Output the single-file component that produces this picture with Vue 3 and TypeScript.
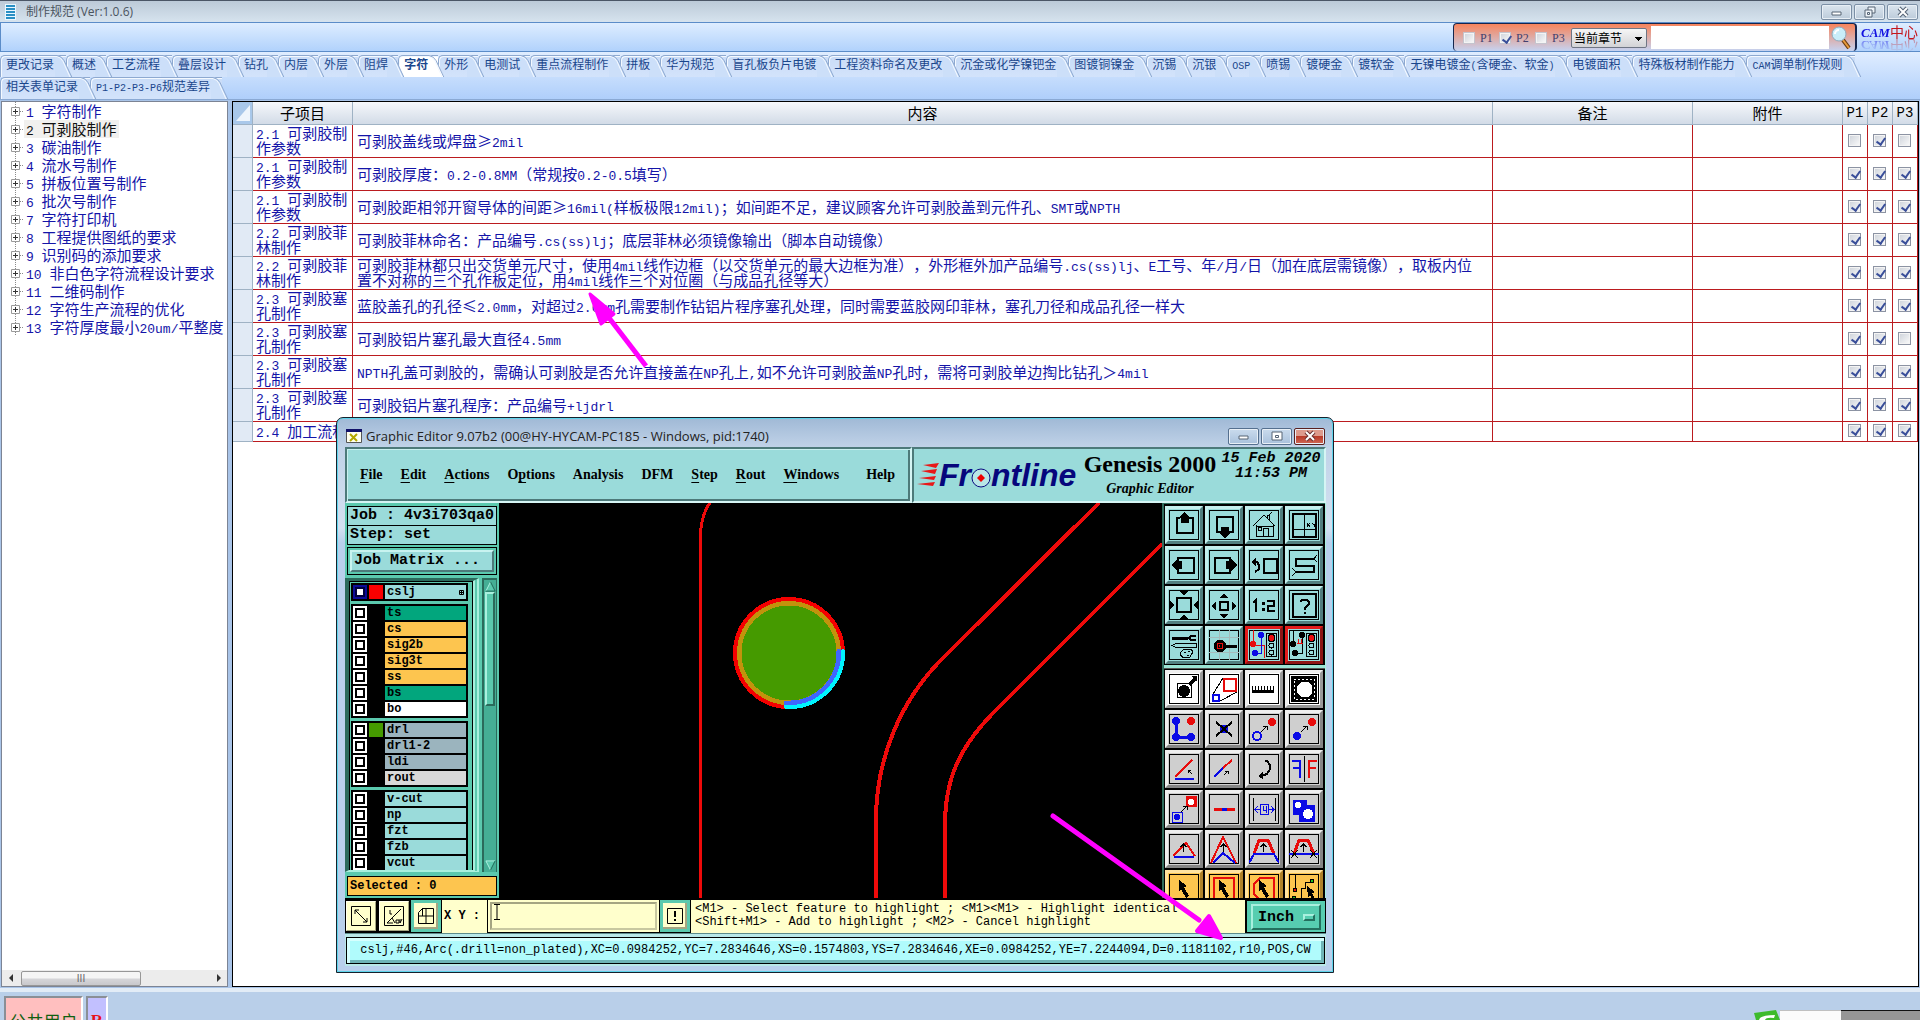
<script setup lang="ts">
import { reactive, ref } from 'vue'

interface Run { text: string; latin: boolean }
interface SpecRow { item: string; body: string; flags: boolean[] }
interface Layer { name: string; tone: string; swatch?: string }
interface Tool { label: string; art: string; tone: string }

/* Splits mixed text so that half-width characters get the monospace face. */
function runs(text: string): Run[] {
  return (text.match(/[\x20-\x7e]+|[^\x20-\x7e]+/g) ?? []).map((part) => ({
    text: part,
    latin: /^[\x20-\x7e]/.test(part),
  }))
}

const tabRows: string[][] = [
  ['更改记录', '概述', '工艺流程', '叠层设计', '钻孔', '内层', '外层', '阻焊', '字符', '外形', '电测试', '重点流程制作', '拼板', '华为规范', '盲孔板负片电镀', '工程资料命名及更改', '沉金或化学镍钯金', '图镀铜镍金', '沉锡', '沉银', 'OSP', '喷锡', '镀硬金', '镀软金', '无镍电镀金(含硬金、软金)', '电镀面积', '特殊板材制作能力', 'CAM调单制作规则'],
  ['相关表单记录', 'P1-P2-P3-P6规范差异'],
]
const activeTab = ref('字符')

const chapters: string[] = [
  '1 字符制作', '2 可剥胶制作', '3 碳油制作', '4 流水号制作', '5 拼板位置号制作', '6 批次号制作', '7 字符打印机',
  '8 工程提供图纸的要求', '9 识别码的添加要求', '10 非白色字符流程设计要求', '11 二维码制作', '12 字符生产流程的优化', '13 字符厚度最小20um/平整度',
]
const activeChapter = ref(1)

const specs = reactive<SpecRow[]>([
  { item: '2.1 可剥胶制作参数', body: '可剥胶盖线或焊盘≥2mil', flags: [false, true, false] },
  { item: '2.1 可剥胶制作参数', body: '可剥胶厚度：0.2-0.8MM（常规按0.2-0.5填写）', flags: [true, true, true] },
  { item: '2.1 可剥胶制作参数', body: '可剥胶距相邻开窗导体的间距≥16mil(样板极限12mil)；如间距不足，建议顾客允许可剥胶盖到元件孔、SMT或NPTH', flags: [true, true, true] },
  { item: '2.2 可剥胶菲林制作', body: '可剥胶菲林命名：产品编号.cs(ss)lj；底层菲林必须镜像输出（脚本自动镜像）', flags: [true, true, true] },
  { item: '2.2 可剥胶菲林制作', body: '可剥胶菲林都只出交货单元尺寸，使用4mil线作边框（以交货单元的最大边框为准），外形框外加产品编号.cs(ss)lj、E工号、年/月/日（加在底层需镜像），取板内位置不对称的三个孔作板定位，用4mil线作三个对位圈（与成品孔径等大）', flags: [true, true, true] },
  { item: '2.3 可剥胶塞孔制作', body: '蓝胶盖孔的孔径≤2.0mm，对超过2.0mm孔需要制作钻铝片程序塞孔处理，同时需要蓝胶网印菲林，塞孔刀径和成品孔径一样大', flags: [true, true, true] },
  { item: '2.3 可剥胶塞孔制作', body: '可剥胶铝片塞孔最大直径4.5mm', flags: [true, true, false] },
  { item: '2.3 可剥胶塞孔制作', body: 'NPTH孔盖可剥胶的，需确认可剥胶是否允许直接盖在NP孔上,如不允许可剥胶盖NP孔时，需将可剥胶单边掏比钻孔＞4mil', flags: [true, true, true] },
  { item: '2.3 可剥胶塞孔制作', body: '可剥胶铝片塞孔程序：产品编号+ljdrl', flags: [true, true, true] },
  { item: '2.4 加工流程', body: '', flags: [true, true, true] },
])

const filters = reactive([
  { name: 'P1', on: false },
  { name: 'P2', on: true },
  { name: 'P3', on: false },
])

/* Menu captions, split round the underlined mnemonic. */
const menus: string[][] = [
  ['', 'F', 'ile'], ['', 'E', 'dit'], ['', 'A', 'ctions'], ['O', 'p', 'tions'], ['Analysis', '', ''],
  ['DFM', '', ''], ['', 'S', 'tep'], ['', 'R', 'out'], ['', 'W', 'indows'], ['Help', '', ''],
]

const layerGroups: Layer[][] = [
  [{ name: 'cslj', tone: 'aqua', swatch: 'red' }],
  [
    { name: 'ts', tone: 'green' }, { name: 'cs', tone: 'amber' }, { name: 'sig2b', tone: 'amber' }, { name: 'sig3t', tone: 'amber' },
    { name: 'ss', tone: 'amber' }, { name: 'bs', tone: 'green' }, { name: 'bo', tone: 'white' },
  ],
  [{ name: 'drl', tone: 'slate', swatch: 'leaf' }, { name: 'drl1-2', tone: 'slate' }, { name: 'ldi', tone: 'slate' }, { name: 'rout', tone: 'silver' }],
  [{ name: 'v-cut', tone: 'aqua' }, { name: 'np', tone: 'aqua' }, { name: 'fzt', tone: 'aqua' }, { name: 'fzb', tone: 'aqua' }, { name: 'vcut', tone: 'aqua' }],
]

const K = '#000000'
const R = '#e80c0c'
const B = '#0a0ae6'
const line = (d: string, c = K, w = 1) => `<path d="${d}" fill="none" stroke="${c}" stroke-width="${w}"/>`
const fill = (d: string, c = K) => `<path d="${d}" fill="${c}"/>`
const dot = (x: number, y: number, r: number, c = K) => `<circle cx="${x}" cy="${y}" r="${r}" fill="${c}"/>`
const ring = (x: number, y: number, r: number, c = K, w = 1, f = 'none') => `<circle cx="${x}" cy="${y}" r="${r}" fill="${f}" stroke="${c}" stroke-width="${w}"/>`
const pointer = fill('M10 6l8 6-3 1 5 9-3 2-5-9-2 3z')
const smallArrow = line('M12 18l6-6M14 12h4v4')
const upArrow = line('M14.5 18v-8M11.5 13l3-3 3 3')
const lights = line('M17.5 3.5h10v23h-10z') + ring(22.5, 8, 3.5, K, 1, R) + ring(22.5, 15.5, 2.5) + ring(22.5, 22.5, 2.5)

const art: [string, string][] = [
  ['Pan up', line('M11 8H8v15h16V8h-4', K, 2) + fill('M15.5 2l6 6h-2v5h-8V8h-2z')],
  ['Pan down', line('M12 22H8V7h16v15h-4', K, 2) + fill('M12 17h8v6h2l-6 5-6-5h2z')],
  ['Home', line('M4 16L15 5l11 11M7 15v11h17V15M14.5 26v-8h5v8M20 10V5l3-3M18 8V5h3M7 16h17') + line('M9.5 17.5h3v3h-3z')],
  ['Coordinates', line('M4 4h23v23H4z', K, 2) + line('M15.5 4v23M4 19.5h23') + line('M18 13l3 4M21 13l-3 4M23 13l2 2 2-2M25 15v2')],
  ['Pan left', line('M9 12V8h16v15H9v-4', K, 2) + fill('M2 15l6-6v2h5v8H8v2z')],
  ['Pan right', line('M21 12V8H6v15h15v-4', K, 2) + fill('M28 15l-6-6v2h-5v8h5v2z')],
  ['Previous view', line('M15 9h13v14H15z', K, 2) + line('M5 12h3l2 3v4l-4 3', K, 2) + fill('M2 12l5-5v9z')],
  ['Snake', line('M25 9H7v6.5h18V22H7', K, 2) + line('M25 9l3-4M25 9l3 3M7 22l-4-4M7 22l-4 4')],
  ['Zoom in', line('M8 8h14v14H8z', K, 2) + fill('M10 1h10l-5 4zM10 29h10l-5-4zM1 10v10l4-5zM29 10v10l-4-5z')],
  ['Zoom out', line('M11 12h8v8h-8z', K, 2) + fill('M10 8h10l-5-4zM10 24h10l-5 4zM7 11v10l-4-5zM23 11v10l4-5z')],
  ['Zoom ratio', line('M4 13l3-3v12', K, 2) + fill('M13 12h3v3h-3zM13 18h3v3h-3z') + line('M18 11h7v5h-6v5h7', K, 2)],
  ['Help', line('M4 4h23v23H4z', K, 2) + line('M11 12l2-2h5l2 2v2l-4 4v2M16 22v2', K, 2)],
  ['Utilities', line('M3 8h16', K, 3) + line('M27 6h-5l-2 2 2 2h5', K, 2) + line('M3 15.5l4-2h20v4H7z') + line('M11 23l4-4h7l2 3-3 5-6 1-4-3zM15 22h2M19 21h2M18 25h2')],
  ['Snap', line('M10 0v30M20 0v30M0 7h30M0 22h30', '#a5bcbc') + fill('M8 10h5l4 4v4l-4 4H8l-3-4v-4z') + fill('M16 15h12v3H16z') + line('M8 13h5v5H8z', R) + line('M10 15.5h1', R, 2)],
  ['Net compare', line('M4 0v15M4 15h11v13', R, 1) + line('M12 5v18H6', B, 1) + dot(4, 14, 3, R) + dot(12, 5, 3, B) + dot(6, 23, 3, B) + lights],
  ['Net report', line('M4 0v15M13 5v18H7') + dot(4, 14, 3) + dot(13, 5, 3) + dot(6, 23, 3) + line('M8 13h6M9 9v4M12 9v4', R) + lights],
  ['Select feature', line('M8.5 9.5h14v14h-14z') + dot(15, 17, 6) + line('M20 11l6-6', K, 3) + fill('M22 2h6v6z')],
  ['Transform', line('M15 5h12v12H15z', R, 2) + line('M4 21h6v6H4z', B, 2) + line('M4 20L14 4M11 27l17-9')],
  ['Measure', fill('M3 12h1v4h2v-4h1v4h2v-4h1v4h2v-4h1v4h2v-4h1v4h2v-4h1v4h2v-4h1v4h2v-4h1v7H3z')],
  ['Surface', fill('M2 2h26v26H2z') + '<path d="M5 5h20v20H5z" fill="none" stroke="#fff" stroke-dasharray="2 2"/>' + fill('M12 8h7l4 4v7l-4 4h-7l-4-4v-7z', '#fff')],
  ['Move points', line('M7 7v16h16', B, 3) + dot(7, 7, 4, B) + dot(7, 23, 4, B) + dot(22, 23, 4, B) + dot(22, 7, 4, R)],
  ['Delete', dot(15, 15, 4, B) + line('M7 8l16 14M23 8L7 22', K, 2)],
  ['Copy', ring(8, 22, 4, B, 2) + dot(23, 8, 4, R) + smallArrow],
  ['Move', dot(8, 22, 4, B) + dot(23, 8, 4, R) + smallArrow],
  ['Rotate', line('M6 23L23 6', R, 2) + line('M6 25h19', B, 2) + line('M23 20l-4-4M19 19v-3h3')],
  ['Stretch', line('M5 23l9-9', B, 2) + line('M14 14l9-8', R, 2) + line('M15 21l4-4M16 17h3v3')],
  ['Undo', line('M16 7h2l3 4v4l-3 5-6 2', K, 2) + fill('M9 22l5-4v7z')],
  ['Mirror', line('M15.5 2v26') + line('M3 7h8v17M11 14H4', B, 2) + line('M28 7h-8v17M20 14h7', R, 2)],
  ['Swap symbol', line('M3 18h10v10H3z', B) + dot(8, 23, 3, B) + fill('M17 2h11v11H17z', R) + dot(22, 8, 3, '#fff') + smallArrow],
  ['Break', line('M5 15h21', R, 3) + line('M13 15h5', B, 3)],
  ['Resize', line('M4.5 4v23M26.5 4v23') + line('M6 15.5h6M19 15.5h6M9 12l-3 3.5 3 3.5M22 12l3 3.5-3 3.5M11.5 10.5h8v10h-8zM14.5 12v4h3M17.5 12v7', B)],
  ['Merge', fill('M4 6h14v5h8v17H10v-7H4z', B) + dot(9, 11, 3, '#fff') + dot(19, 20, 5, '#fff')],
  ['Corner', line('M4 22L17 9l9 13', R, 2) + line('M5 23h20', B, 2) + upArrow],
  ['Peak', line('M2 29L14 3l13 26', R, 2) + line('M4 29l10-10 12 10', B, 2) + upArrow],
  ['Trapezoid', line('M5 20L10 6h9l6 14', R, 3) + line('M0 29l5-9h20l5 9', B, 2) + upArrow],
  ['Trapezoid cut', line('M5 20L10 6h9l6 14', R, 3) + line('M0 20h30', B, 2) + line('M2 16l7 8M9 16l-7 8M21 16l7 8M28 16l-7 8') + upArrow],
  ['Pick', pointer],
  ['Pick in frame', line('M5 4h20v22H5z', R, 2) + pointer],
  ['Pick in polygon', line('M11 4h14v22H11l-6-6V10z', R, 2) + pointer],
  ['Pick net', line('M6 0v16M23 8h-7v6h-4v10H6') + ring(6, 16, 2, K, 1, R) + ring(23, 7, 2, K, 1, '#1fc01f') + ring(5, 24, 2, K, 1, '#1fc01f') + fill('M18 12l8 6-3 1 4 9h-3l-3-7-2 2z')],
]
const tools: Tool[] = art.map(([label, picture], i) => ({
  label,
  art: picture,
  tone: i < 14 ? 'aqua' : i < 16 ? 'alert' : i < 20 ? 'white' : i < 36 ? 'grey' : 'amber',
}))
const toolGroups: Tool[][] = [tools.slice(0, 16), tools.slice(16)]

const search = ref('')
const coords = ref('')
</script>

<template>
  <div class="app">
    <header class="titlebar">
      <svg class="doc-icon" viewBox="0 0 14 16" aria-hidden="true">
        <path d="M1 0h11v16H1z" fill="#e9f7ff" />
        <path d="M2 2h9M2 5h9M2 8h9M2 11h9M2 14h9" stroke="#2a8fc4" stroke-width="2" />
      </svg>
      <h1>制作规范 (Ver:1.0.6)</h1>
      <div class="controls">
        <button type="button" aria-label="最小化"><svg viewBox="0 0 14 12"><path d="M2 6h9v3H2z" fill="#fff" stroke="#566475" /></svg></button>
        <button type="button" aria-label="还原"><svg viewBox="0 0 14 12"><path d="M5 1h7v6H5z" fill="#eef3f8" stroke="#566475" /><path d="M2 4h7v7H2zM4.5 6.5h2v2h-2z" fill="#eef3f8" stroke="#566475" /></svg></button>
        <button type="button" aria-label="关闭"><svg viewBox="0 0 14 12"><path d="M3 2l8 8M11 2l-8 8" stroke="#566475" stroke-width="4" /><path d="M3 2l8 8M11 2l-8 8" stroke="#fff" stroke-width="2" /></svg></button>
      </div>
    </header>

    <div class="toolbar">
      <div class="searchbox">
        <label v-for="f in filters" :key="f.name" class="filter"><input v-model="f.on" type="checkbox" class="tick" />{{ f.name }}</label>
        <select aria-label="范围"><option>当前章节</option></select>
        <input v-model="search" type="text" class="query" aria-label="搜索" />
        <button type="button" class="go" aria-label="查找">
          <svg viewBox="0 0 20 24"><path d="M12 14l6 8" stroke="#6b3c12" stroke-width="4" /><path d="M12 14l6 8" stroke="#e89a3c" stroke-width="2" /><circle cx="8" cy="8" r="7" fill="#c9eef9" stroke="#8fa9bc" stroke-width="1" /><path d="M4 8a4 4 0 0 1 4-4" fill="none" stroke="#fff" stroke-width="2" /></svg>
        </button>
      </div>
      <div class="brand"><i>CAM</i><span>中心</span></div>
    </div>

    <nav class="tabs">
      <div v-for="(row, r) in tabRows" :key="r" class="tab-row">
        <button v-for="t in row" :key="t" type="button" class="tab" :class="{ active: t === activeTab, long: t.length > 3 }" @click="activeTab = t">
          <span v-for="(s, i) in runs(t)" :key="i" class="caption" :class="{ latin: s.latin }">{{ s.text }}</span>
          <svg class="slant" viewBox="0 0 18 22" aria-hidden="true">
            <path class="face" d="M0 0h2q5 1 7 5l8 17H0z" />
            <path d="M0 1.5h2q4 1 6 5l7 15.5" fill="none" stroke="#f4f9ff" />
            <path d="M0 .5h2q5 1 7 5l8 17" fill="none" stroke="#8ea9d0" />
          </svg>
        </button>
      </div>
    </nav>

    <main class="work">
      <aside class="tree">
        <ul>
          <li v-for="(c, i) in chapters" :key="c">
            <svg class="expander" viewBox="0 0 16 18" aria-hidden="true">
              <path d="M7.5 0v18M8 9.5h8" stroke="#8a8a8a" stroke-dasharray="1 1" />
              <path d="M3.5 5.5h8v8h-8z" fill="#fff" stroke="#9a9a9a" />
              <path d="M5 9.5h5M7.5 7v5" stroke="#333" />
            </svg>
            <button type="button" :class="{ current: i === activeChapter }" @click="activeChapter = i">
              <span v-for="(s, k) in runs(c)" :key="k" :class="{ latin: s.latin }">{{ s.text }}</span>
            </button>
          </li>
        </ul>
        <div class="hscroll">
          <svg viewBox="0 0 6 10"><path d="M5 1v8L1 5z" fill="#333" /></svg>
          <div class="track"><div class="thumb">III</div></div>
          <svg viewBox="0 0 6 10"><path d="M1 1v8l4-4z" fill="#333" /></svg>
        </div>
      </aside>

      <section class="sheet">
        <table>
          <colgroup><col class="c-mark" /><col class="c-item" /><col /><col class="c-note" /><col class="c-file" /><col class="c-flag" /><col class="c-flag" /><col class="c-flag" /></colgroup>
          <thead>
            <tr>
              <th class="corner"><svg viewBox="0 0 14 16" aria-hidden="true"><path d="M14 0v16H0z" fill="#eef5fc" /></svg></th>
              <th>子项目</th><th>内容</th><th>备注</th><th>附件</th>
              <th class="flag">P1</th><th class="flag">P2</th><th class="flag">P3</th>
            </tr>
          </thead>
          <tbody>
            <tr v-for="(row, i) in specs" :key="i">
              <th class="mark"></th>
              <td class="item"><span v-for="(s, k) in runs(row.item)" :key="k" :class="{ latin: s.latin }">{{ s.text }}</span></td>
              <td class="content"><span v-for="(s, k) in runs(row.body)" :key="k" :class="{ latin: s.latin }">{{ s.text }}</span></td>
              <td></td>
              <td></td>
              <td v-for="(_, k) in row.flags" :key="k" class="flag"><input v-model="row.flags[k]" type="checkbox" class="tick" :aria-label="'P' + (k + 1)" /></td>
            </tr>
          </tbody>
        </table>
      </section>
    </main>

    <footer class="status">
      <div class="user">公共用户</div>
      <div class="role">R</div>
      <div class="tray">
        <svg class="ime" viewBox="0 0 26 10" aria-hidden="true"><path d="M0 3L22 0l4 10H2z" fill="#3dbb2c" /><path d="M5 10q1-5 16-5l-1 3q-8-1-9 2z" fill="#fff" /></svg>
        <div class="ime-bar"></div>
        <div class="ime-end"></div>
      </div>
    </footer>

    <section class="editor" aria-label="Graphic Editor">
      <header class="ed-title">
        <svg viewBox="0 0 16 14" class="x-icon" aria-hidden="true"><path d="M.5.5h15v13H.5z" fill="#fffff0" stroke="#555" /><path d="M0 0h16v3H0z" fill="#12126a" /><path d="M4 5l7 7M11 5l-7 7" stroke="#b5a800" stroke-width="2" /></svg>
        <h2>Graphic Editor 9.07b2 (00@HY-HYCAM-PC185 - Windows, pid:1740)</h2>
        <div class="controls">
          <button type="button" aria-label="Minimize"><svg viewBox="0 0 14 12"><path d="M2 6h9v3H2z" fill="#fff" stroke="#566475" /></svg></button>
          <button type="button" aria-label="Maximize"><svg viewBox="0 0 14 12"><path d="M2 2h10v8H2zM5.5 5.5h3v2h-3z" fill="#fff" stroke="#566475" /></svg></button>
          <button type="button" class="close" aria-label="Close"><svg viewBox="0 0 14 12"><path d="M3 2l8 8M11 2l-8 8" stroke="#6a3030" stroke-width="4" /><path d="M3 2l8 8M11 2l-8 8" stroke="#fff" stroke-width="2" /></svg></button>
        </div>
      </header>

      <div class="ed-body">
        <div class="ed-top">
          <nav class="menu">
            <button v-for="m in menus" :key="m.join('')" type="button">{{ m[0] }}<u>{{ m[1] }}</u>{{ m[2] }}</button>
          </nav>
          <div class="banner">
            <div class="logo">
              <svg class="streaks" viewBox="0 0 22 26" aria-hidden="true"><path d="M6 3l16-2-3 5zM4 9l16-2-2 5zM2 16l17-2-2 4zM0 22l18-2-2 4z" fill="#e81818" /></svg>
              <span>Fr</span>
              <svg class="target" viewBox="0 0 20 20" aria-hidden="true"><circle cx="10" cy="10" r="9" fill="#b8e6e6" stroke="#0a0a80" stroke-width="1" /><path d="M10 6l4 4-4 4-4-4z" fill="#e00" /></svg>
              <span>ntline</span>
            </div>
            <div class="product"><strong>Genesis 2000</strong><em>Graphic Editor</em></div>
            <div class="clock">15 Feb 2020<br />11:53 PM</div>
          </div>
        </div>

        <div class="ed-mid">
          <aside class="layers">
            <div class="box">Job : 4v3i703qa0</div>
            <div class="box step">Step: set</div>
            <div class="box matrix"><button type="button">Job Matrix ...</button></div>
            <div class="list-area">
              <div class="list">
                <div v-for="(g, gi) in layerGroups" :key="gi" class="group">
                  <div v-for="l in g" :key="l.name" class="layer">
                    <input type="checkbox" class="display" :class="{ work: l.name === 'cslj' }" :aria-label="'Display ' + l.name" />
                    <i class="swatch" :class="l.swatch"></i>
                    <span class="name" :class="l.tone">{{ l.name }}<svg v-if="gi === 0" class="affected" viewBox="0 0 5 5" aria-hidden="true"><path d="M.5.5h4v4h-4zM2.5 0v5M0 2.5h5" fill="none" stroke="#000" /></svg></span>
                  </div>
                </div>
              </div>
              <div class="vscroll">
                <svg viewBox="0 0 12 12"><path d="M6 1L1 11h10z" fill="#5bc9ae" /><path d="M6 1L1 11" stroke="#b5f5e5" /><path d="M6 1l5 10H1" fill="none" stroke="#1c6453" /></svg>
                <div class="grip"></div>
                <svg viewBox="0 0 12 12"><path d="M1 1h10L6 11z" fill="#5bc9ae" /><path d="M6 11L1 1h10" fill="none" stroke="#b5f5e5" /><path d="M6 11l5-10" stroke="#1c6453" /></svg>
              </div>
            </div>
            <div class="box selected">Selected : 0</div>
          </aside>

          <div class="canvas">
            <svg viewBox="0 0 663 395" preserveAspectRatio="xMinYMin slice" shape-rendering="crispEdges" role="img" aria-label="Layer cslj">
              <path d="M201.5 395V30Q203 10 211 0" fill="none" stroke="#ee0a0a" stroke-width="3" />
              <g fill="none" stroke="#ee0a0a" stroke-width="4">
                <path d="M600 0L447 152C400 197 377 258 377 317V395" />
                <path d="M663 41L501 203C463 240 446 272 446 322V395" />
              </g>
              <circle cx="290" cy="150" r="49" fill="#459a00" />
              <circle cx="290" cy="150" r="50" fill="none" stroke="#c2930c" stroke-width="5" />
              <circle cx="290" cy="150" r="54" fill="none" stroke="#f40000" stroke-width="4" />
              <path d="M340 148A50 50 0 0 1 287 200" fill="none" stroke="#3f66ff" stroke-width="5" stroke-linecap="round" />
              <path d="M344 148A54 54 0 0 1 287 204" fill="none" stroke="#00f4ff" stroke-width="4" stroke-linecap="round" />
            </svg>
          </div>

          <div class="tools">
            <div v-for="(g, gi) in toolGroups" :key="gi" class="tool-grid" :class="{ lower: gi === 1 }">
              <button v-for="t in g" :key="t.label" type="button" class="tool" :class="t.tone" :aria-label="t.label">
                <svg viewBox="0 0 30 30" shape-rendering="crispEdges" v-html="t.art"></svg>
              </button>
            </div>
          </div>
        </div>

        <div class="ed-input">
          <button type="button" class="mode" aria-label="Window"><svg viewBox="0 0 20 20"><path d="M.5.5h19v19H.5zM4 4l12 12M4 8V4h4M12 16h4v-4" fill="none" stroke="#000" /></svg></button>
          <button type="button" class="mode" aria-label="Angle"><svg viewBox="0 0 20 20"><path d="M.5.5h19v19H.5zM3 17L17 3M3 17h6M6 4v4h2M8 12l3 5M12 14h3v3h-3zM16 13v4l2-4" fill="none" stroke="#000" /></svg></button>
          <button type="button" class="mode teal" aria-label="Grid"><svg viewBox="0 0 20 20"><path d="M2.5 6.5l4-4h11v15h-15zM10 2v16M2 10h16M6.5 2v8" fill="none" stroke="#000" /></svg></button>
          <label for="xy" class="xy">X Y :</label>
          <div class="field"><input id="xy" v-model="coords" type="text" /><svg class="caret" viewBox="0 0 6 16" aria-hidden="true"><path d="M0 .5h6M3 0v16M0 15.5h6" stroke="#000" /></svg></div>
          <button type="button" class="mode teal" aria-label="Alert"><svg viewBox="0 0 20 20"><path d="M2.5 2.5h15v15h-15z" fill="none" stroke="#000" /><path d="M10 5v6M10 13v2" stroke="#000" stroke-width="2" /></svg></button>
          <p class="hint">&lt;M1&gt; - Select feature to highlight ; &lt;M1&gt;&lt;M1&gt; - Highlight identical<br />&lt;Shift+M1&gt; - Add to highlight ; &lt;M2&gt; - Cancel highlight</p>
          <div class="unit"><button type="button">Inch<i></i></button></div>
        </div>

        <div class="ed-status"><p>cslj,#46,Arc(.drill=non_plated),XC=0.0984252,YC=7.2834646,XS=0.1574803,YS=7.2834646,XE=0.0984252,YE=7.2244094,D=0.1181102,r10,POS,CW</p></div>
      </div>
    </section>

    <svg class="arrow first" viewBox="0 0 64 80" aria-hidden="true"><path d="M60 76L17 20" stroke="#ff00ff" stroke-width="5" /><path d="M4 4l24 20-13 10z" fill="#ff00ff" stroke="#ff00ff" stroke-width="3" stroke-linejoin="round" /></svg>
    <svg class="arrow second" viewBox="0 0 178 132" aria-hidden="true"><path d="M4 5l146 104" stroke="#ff00ff" stroke-width="5" stroke-linecap="round" /><path d="M172 127l-24-7 12-15z" fill="#ff00ff" stroke="#ff00ff" stroke-width="4" stroke-linejoin="round" /></svg>
  </div>
</template>

<style>
body { margin: 0; }
</style>

<style scoped>
* { box-sizing: border-box; }
.app { position: relative; display: flex; flex-direction: column; height: 100vh; overflow: hidden; background: #b9cfe9; font-family: "Noto Sans CJK SC", sans-serif; font-size: 12px; text-spacing-trim: space-all; color: #000; }
button, input, select { font: inherit; color: inherit; margin: 0; padding: 0; border: 0; border-radius: 0; }
button { background: none; text-spacing-trim: space-all; }
svg { display: block; }
h1, h2, p, ul { margin: 0; padding: 0; font-weight: 400; }

.titlebar { display: flex; align-items: center; flex: none; height: 22px; padding: 0 2px 0 4px; border-top: 1px solid #4b5666; background: linear-gradient(#bccad8, #d6e3ee); }
.doc-icon { width: 14px; height: 16px; margin-right: 8px; }
h1 { flex: 1; font-family: "Open Sans", "Noto Sans CJK SC", sans-serif; font-size: 12px; line-height: 18px; color: #4a545e; }
.controls { display: flex; gap: 2px; }
.controls button { display: flex; align-items: center; justify-content: center; width: 31px; height: 16px; border: 1px solid #7b8fa5; border-radius: 2px; background: linear-gradient(#dbe5ee, #bccbda); box-shadow: inset 0 0 0 1px #e8eff6; }
.controls svg { width: 14px; height: 12px; }

.toolbar { display: flex; justify-content: flex-end; flex: none; height: 30px; border: 1px solid #5b8cc8; border-right: 0; background: linear-gradient(#deedff, #b1d2fc); }
.searchbox { display: flex; align-items: center; width: 404px; padding: 0 4px 0 9px; border: 1px solid #16264d; border-width: 1px 2px 0 1px; border-radius: 4px; background: linear-gradient(#f7845c, #c5d3f1); }
.filter { display: flex; align-items: center; gap: 5px; width: 36px; font-family: "Liberation Serif", serif; font-size: 12px; line-height: 14px; color: #42406e; }
.tick { appearance: none; flex: none; display: block; width: 13px; height: 13px; border: 1px solid #8c93a3; background: linear-gradient(135deg, #cdd2da, #fbfbfb); box-shadow: inset 0 0 0 1px #f4f4f4; }
.tick:checked::after { content: ""; display: block; width: 4px; height: 7px; margin: 1px 0 0 4px; border: solid #3a4f9a; border-width: 0 2px 2px 0; transform: rotate(35deg); }
.filter .tick { width: 12px; height: 12px; border-color: #c4c4ce; }
select { appearance: none; width: 76px; height: 20px; margin: 0 4px 0 0; padding: 0 2px; border: 1px solid #6f7685; border-radius: 2px; font-size: 12px; line-height: 16px; background-image: linear-gradient(-135deg, #000 50%, transparent 50%), linear-gradient(135deg, #000 50%, transparent 50%), linear-gradient(#f6f6f6, #d3d3d6); background-size: 4px 4px, 4px 4px, 100% 100%; background-position: 63px 8px, 67px 8px, 0 0; background-repeat: no-repeat; }
.query { flex: 1; min-width: 0; height: 23px; padding: 0 4px; background: #fff; }
.go { margin-left: 2px; }
.go svg { width: 20px; height: 24px; }
.brand { width: 63px; height: 16px; padding-left: 4px; font-size: 14px; line-height: 16px; white-space: nowrap; color: #c4151c; -webkit-box-reflect: below 0 linear-gradient(transparent 20%, rgba(0, 0, 0, .5)); }
.brand i { font-family: "Liberation Serif", serif; font-weight: 700; font-size: 13px; color: #1212e0; }

.tabs { flex: none; height: 48px; padding: 3px 0 0; border-bottom: 1px solid #8aa9d4; background: linear-gradient(#e0edff, #afcffb); }
.tab-row { display: flex; height: 22px; }
.tab { position: relative; flex: none; height: 22px; padding: 0 10px 5px 5px; border: 1px solid #8ea9d0; border-width: 1px 0 0 1px; border-radius: 5px 0 0 0; background: linear-gradient(#c9dcf7, #d3e3fb); box-shadow: inset 1px 1px 0 #f4f9ff; line-height: 16px; color: #1a468c; white-space: nowrap; }
.tab.long { padding-right: 12px; }
.caption { position: relative; z-index: 2; }
.tab .latin { font-family: "Liberation Mono", monospace; font-size: 10px; line-height: 1px; }
.slant { position: absolute; z-index: 1; top: -1px; right: -7px; width: 18px; height: 22px; }
.face { fill: #ccdff9; }
.active { background: #fff; font-weight: 700; }
.active .face { fill: #fff; }

.work { display: flex; flex: 1; min-height: 0; gap: 4px; padding: 1px; background: #a9c4e8; border-bottom: 4px solid #e2ecf6; }
.tree { display: flex; flex-direction: column; justify-content: space-between; flex: none; width: 227px; overflow: hidden; border: 1px solid #7c8494; background: #fff; }
.tree ul { list-style: none; }
.tree li { display: flex; align-items: center; height: 18px; padding-left: 6px; font-size: 15px; }
.expander { flex: none; width: 16px; height: 18px; }
.tree li button { height: 18px; padding: 0 2px; line-height: 18px; white-space: pre; color: #1414a8; }
.tree li .current { background: #f1f0ee; color: #111; }
.latin { font-family: "Liberation Mono", monospace; font-size: 13px; line-height: 1px; }
.hscroll { display: flex; align-items: center; justify-content: space-between; height: 16px; padding: 0 5px 0 6px; background: #ececec; }
.hscroll svg { width: 6px; height: 10px; }
.track { flex: 1; padding: 0 7px; }
.thumb { width: 120px; height: 15px; border: 1px solid #979797; border-radius: 2px; background: linear-gradient(#f5f5f5 45%, #d5d5d8 55%, #c8c8cc); font-family: "Liberation Sans", sans-serif; font-size: 10px; line-height: 13px; text-align: center; color: #666; }

.sheet { flex: 1; min-width: 0; border: 1px solid #000; background: #fff; }
table { width: 100%; table-layout: fixed; border-collapse: separate; border-spacing: 0; }
.c-mark { width: 20px; }
.c-item { width: 100px; }
.c-note { width: 200px; }
.c-file { width: 150px; }
.c-flag { width: 25px; }
thead th { height: 23px; padding: 0; border: 1px solid #9fb2c4; border-width: 0 1px 1px 0; background: linear-gradient(#f6f8fb, #d2dbe7); font-size: 15px; line-height: 20px; font-weight: 400; }
thead .flag { font-family: "Liberation Mono", monospace; font-size: 14px; }
thead .corner { background: #a9c8ea; }
.corner svg { width: 14px; height: 16px; margin: 0 auto; }
.mark { padding: 0; border: 1px solid #9fb2c4; border-width: 0 1px 1px 0; background: #e1eaf5; }
td { height: 33px; padding: 0 0 2px 4px; border: 1px solid #bb1b1f; border-width: 0 1px 1px 0; font-size: 15px; line-height: 15px; color: #1414a8; white-space: pre-wrap; vertical-align: middle; }
td.item { padding-left: 3px; }
td.content { padding-right: 16px; }
td.flag { padding-left: 0; padding-right: 1px; }
tbody tr:last-child td { height: 20px; }
td .tick { margin: 0 auto; }

.status { display: flex; flex: none; height: 28px; padding: 4px 0 0 4px; gap: 3px; overflow: hidden; background: #b9cfe9; }
.user, .role { flex: none; height: 40px; padding-top: 13px; border: 2px solid #8a8f96; border-right-color: #fff; font-size: 17px; line-height: 20px; text-align: center; }
.user { width: 79px; background: #ffbfbf; color: #106010; }
.role { width: 22px; background: #c2c0ff; font-family: "Liberation Serif", serif; font-weight: 700; color: #e8101c; }
.tray { display: flex; margin: 14px 0 0 auto; }
.ime { width: 26px; height: 10px; }
.ime-bar { width: 61px; height: 10px; background: #fbfbfb; border-top: 1px solid #c0c0c0; }
.ime-end { width: 79px; height: 10px; border-top: 1px solid #111; background: #969696; }

.editor { position: absolute; z-index: 3; left: 336px; top: 417px; width: 998px; height: 556px; display: flex; flex-direction: column; padding: 1px 7px 7px 8px; border: 1px solid #16212c; border-radius: 7px 7px 0 0; background: linear-gradient(#a0b9d6, #c1d3e8 30px, #d4e1f1 110px, #b9d0ec 125px); box-shadow: inset 0 0 0 1px #5fd4ec; }
.ed-title { display: flex; align-items: center; flex: none; height: 28px; padding: 6px 1px 0 1px; }
.x-icon { width: 16px; height: 14px; margin-right: 4px; }
.ed-title h2 { flex: 1; font-family: "Open Sans", sans-serif; font-size: 13px; line-height: 18px; color: #222; }
.ed-title .controls button { height: 17px; border-color: #55708f; background: linear-gradient(#cadbed, #a9c1dc); }
.ed-title .controls .close { background: linear-gradient(#dd9a8c 45%, #b93a28 50%, #cf6a58); border-color: #5a2020; }

.ed-body { display: flex; flex-direction: column; flex: 1; min-height: 0; background: #000; font-family: "Liberation Mono", monospace; font-weight: 700; }
.ed-top { display: flex; flex: none; height: 56px; background: #9adbda; }
.menu { display: flex; align-items: center; flex: none; width: 567px; padding: 0 15px 0 13px; gap: 18px; border: 2px solid #4d7a7a; border-right-color: #d5f5f4; border-bottom-color: #d5f5f4; box-shadow: inset 1px 1px 0 #c8f0ef, inset -2px -2px 0 #4d7a7a; font-family: "Liberation Serif", serif; font-size: 14px; }
.menu u { text-underline-offset: 3px; text-decoration-thickness: 1px; }
.menu button { line-height: 18px; }
.menu button:last-child { margin-left: auto; }
.banner { display: flex; flex: 1; min-width: 0; padding-left: 3px; border: 2px solid #4d7a7a; border-right-color: #d5f5f4; border-bottom-color: #d5f5f4; }
.logo { display: flex; align-items: center; flex: none; width: 165px; font-family: "Liberation Sans", sans-serif; font-style: italic; font-size: 32px; line-height: 36px; color: #06067c; }
.streaks { width: 22px; height: 26px; }
.target { width: 20px; height: 20px; margin-top: 6px; }
.product { display: flex; flex-direction: column; align-items: center; flex: none; width: 136px; padding-top: 2px; font-family: "Liberation Serif", serif; }
.product strong { font-size: 24px; line-height: 26px; white-space: nowrap; }
.product em { font-size: 14px; line-height: 24px; }
.clock { flex: 1; padding-top: 2px; font-style: italic; font-size: 15px; line-height: 15px; text-align: center; white-space: nowrap; }

.ed-mid { display: flex; flex: none; height: 397px; padding-bottom: 2px; }
.layers { display: flex; flex-direction: column; flex: none; width: 154px; padding: 3px 2px 2px; background: #5bc9ae; }
.box { flex: none; height: 20px; padding: 0 2px; border: 1px solid #000; background: #9adbda; font-size: 15px; line-height: 18px; white-space: pre; }
.step { margin-top: -1px; }
.matrix { height: 28px; margin-top: 2px; padding: 2px; background: #5bc9ae; }
.matrix button { display: block; width: 100%; height: 22px; padding-left: 2px; border: 2px solid #c8f3f0; border-right-color: #4d7a7a; border-bottom-color: #4d7a7a; background: #9adbda; text-align: left; line-height: 18px; }
.list-area { display: flex; flex: 1; min-height: 0; margin: 3px -2px 4px; padding-right: 2px; }
.list { flex: none; width: 134px; padding: 2px 2px 0 2px; border: solid #2b6a5b; border-width: 3px 0 0 4px; border-right: 6px double #a9f0de; border-bottom: 2px solid #a9f0de; box-shadow: inset 1px 1px 0 #000, inset -1px 0 0 #000; overflow: hidden; }
.group { margin-bottom: 3px; padding: 2px; width: 117px; background: #000; display: flex; flex-direction: column; gap: 2px; }
.layer { display: flex; gap: 2px; height: 14px; }
.display { appearance: none; flex: none; width: 14px; height: 14px; border: 2px solid #fff; background: #fff; box-shadow: inset 0 0 0 2px #000; }
.display.work { border-color: #0c0c98; box-shadow: inset 0 0 0 2px #000040; }
.swatch { flex: none; width: 14px; }
.red { background: #fa0000; }
.leaf { background: #459a00; }
.name { display: flex; align-items: center; justify-content: space-between; flex: 1; padding: 0 2px; font-size: 12px; line-height: 14px; }
.affected { width: 5px; height: 5px; }
.aqua { background: #9adbda; }
.green { background: #02a67d; }
.amber { background: #fdc54f; }
.white { background: #fff; }
.slate { background: #9bb4be; }
.silver { background: #d8d8d8; }
.vscroll { display: flex; flex-direction: column; width: 15px; margin-left: 3px; padding: 1px; border: solid #2b6a5b; border-width: 2px 1px 0 2px; background: #45ae95; }
.vscroll svg { flex: none; width: 11px; height: 11px; }
.vscroll svg:last-child { margin-top: auto; }
.grip { height: 114px; border: 2px solid #a9f0de; border-right-color: #2b6a5b; border-bottom-color: #2b6a5b; background: #5bc9ae; }
.selected { background: #fdc54f; font-size: 12px; }
.canvas { flex: 1; min-width: 0; background: #000; }
.canvas svg { width: 100%; height: 100%; }
.tools { flex: none; width: 164px; overflow: hidden; border-left: 2px solid #2f6b5c; background: #5bc9ae; border-right: 1px solid #a9f0de; }
.tool-grid { display: grid; grid-template-columns: repeat(4, 38px); grid-auto-rows: 38px; gap: 2px; padding: 2px 1px 1px; background: #000; border-top: 1px solid #2f6b5c; border-bottom: 3px solid #9ae3d3; }
.lower { border-top: 1px solid #555; border-bottom: 0; padding-top: 1px; }
.tool { display: block; width: 38px; height: 38px; padding: 1px; border: 3px solid #c5efed; border-right-color: #527f7f; border-bottom-color: #527f7f; }
.tool svg { width: 30px; height: 30px; box-shadow: inset 0 0 0 1px #000; }
.alert { border-color: #e31b1b #8e1414 #8e1414 #e31b1b; background: #9adbda; }
.tool.white { border-color: #f0f0f0 #9a9a9a #9a9a9a #f0f0f0; }
.grey { border-color: #efefef #868686 #868686 #efefef; background: #cfcfcf; }
.tool.amber { border-color: #ffe3a0 #b0832a #b0832a #ffe3a0; }

.ed-input { display: flex; flex: none; gap: 1px; height: 33px; }
.mode { display: flex; align-items: center; justify-content: center; flex: none; width: 32px; height: 32px; border: 2px solid #fffff0; border-right-color: #a5a582; border-bottom-color: #a5a582; background: #ffffcc; outline: 1px solid #000; outline-offset: -1px; }
.mode svg { width: 20px; height: 20px; }
.teal { width: 30px; border: 3px solid #5bc9ae; box-shadow: inset -2px -2px 0 #a5a582; outline: 0; }
.xy { flex: none; width: 45px; padding-left: 2px; background: #ffffcc; font-size: 12px; line-height: 32px; }
.field { position: relative; flex: none; width: 171px; height: 32px; padding: 2px; background: #ffffcc; }
.field input { display: block; width: 100%; height: 28px; padding-left: 6px; border: 2px solid #a5a582; border-right-color: #c8c8a0; border-bottom-color: #c8c8a0; background: #ffffcc; outline: 0; }
.caret { position: absolute; left: 6px; top: 4px; width: 6px; height: 16px; }
.hint { flex: 1; min-width: 0; padding: 3px 4px; background: #ffffcc; font-size: 12px; line-height: 13px; white-space: nowrap; }
.unit { flex: none; width: 80px; height: 33px; padding: 3px 4px; border: 1px solid #000; background: #57cdb0; }
.unit button { display: flex; align-items: center; justify-content: space-between; width: 100%; height: 26px; padding: 0 4px 0 5px; border: 2px solid #a9f0de; border-right-color: #24705e; border-bottom-color: #24705e; font-size: 15px; }
.unit i { width: 12px; height: 7px; border: 2px solid #a9f0de; border-right-color: #24705e; border-bottom-color: #24705e; }
.ed-status { flex: 1; padding: 3px 1px 2px; background: #b9e8e8; border-top: 1px solid #5d8c8c; }
.ed-status p { height: 27px; border: 1px solid #000; box-shadow: inset 3px 3px 0 #d6fffe, inset -3px -3px 0 #6fb4b6; background: #b0fbfc; font-size: 12px; line-height: 25px; text-align: center; white-space: nowrap; }

.arrow { position: absolute; z-index: 4; pointer-events: none; }
.first { left: 586px; top: 290px; width: 64px; height: 80px; }
.second { left: 1049px; top: 811px; width: 178px; height: 132px; }
</style>
